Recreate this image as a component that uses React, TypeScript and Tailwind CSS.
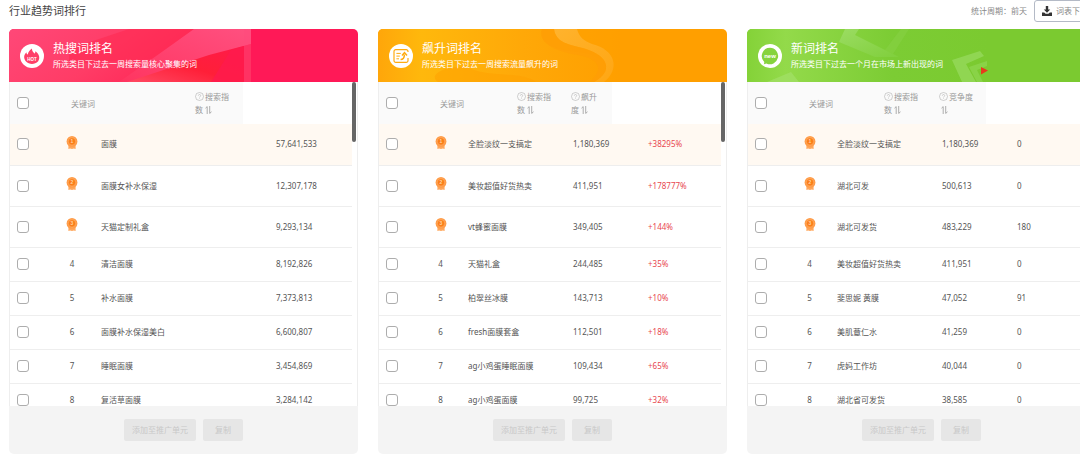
import React from "react";

type Row = { word: string; values: string[] };

type Panel = {
  id: string;
  title: string;
  subtitle: string;
  banner: string;
  art: React.ReactNode;
  icon: React.ReactNode;
  headers: string[];
  headerCols: string[];
  bodyCols: string[];
  valueColor: string;
  rows: Row[];
};

function HotArt() {
  return (
    <svg className="absolute inset-y-0 left-0 h-full w-[242px]" viewBox="0 0 242 53" preserveAspectRatio="none" aria-hidden="true">
      <defs>
        <linearGradient id="hotBase" x1="0" y1="0" x2="1" y2="0.3">
          <stop offset="0" stopColor="#ff4878" />
          <stop offset="0.5" stopColor="#ff3c66" />
          <stop offset="1" stopColor="#ff1f50" />
        </linearGradient>
        <linearGradient id="hotRed" x1="0" y1="1" x2="1" y2="0">
          <stop offset="0" stopColor="#ff4a63" />
          <stop offset="0.45" stopColor="#ff1f38" />
          <stop offset="1" stopColor="#ff1a4c" />
        </linearGradient>
        <linearGradient id="hotPink" x1="0" y1="1" x2="1" y2="0">
          <stop offset="0" stopColor="#ff3560" />
          <stop offset="1" stopColor="#ff5080" />
        </linearGradient>
      </defs>
      <rect width="242" height="53" fill="url(#hotBase)" />
      <path d="M60 20 L120 0 H185 L145 30 L60 35Z" fill="#ff2850" opacity="0.55" />
      <path d="M150 25 L185 0 H242 V16 L200 27 L120 53 H110Z" fill="url(#hotPink)" />
      <path d="M118 53 L200 26 L242 15 V53Z" fill="url(#hotRed)" />
      <path d="M202 53 L222 21 L242 15 V53Z" fill="#ff1a4e" opacity="0.8" />
      <rect x="235" width="7" height="53" fill="#ff4a7c" opacity="0.5" />
    </svg>
  );
}

function RiseArt() {
  return (
    <svg className="absolute inset-y-0 left-0 h-full w-[242px]" viewBox="0 0 242 53" preserveAspectRatio="none" aria-hidden="true">
      <defs>
        <linearGradient id="riseBase" x1="0" y1="0" x2="1" y2="0">
          <stop offset="0" stopColor="#ffa60a" />
          <stop offset="0.18" stopColor="#ffb80c" />
          <stop offset="0.6" stopColor="#ffa808" />
          <stop offset="1" stopColor="#ff9f00" />
        </linearGradient>
        <linearGradient id="riseWave" x1="0" y1="0" x2="1" y2="1">
          <stop offset="0" stopColor="#ffbe4a" />
          <stop offset="1" stopColor="#ffab20" />
        </linearGradient>
      </defs>
      <rect width="242" height="53" fill="url(#riseBase)" />
      <path d="M80 38 C86 38 90 38 96 41 C118 48 145 43 158 53 H60 C50 46 66 38 80 38Z" fill="#ff9f00" opacity="0.5" />
      <path d="M164 0 C160 14 176 21 200 23 C228 26 234 40 222 53 H242 V0Z" fill="#ff9f00" opacity="0.5" />
      <path d="M176 0 H199 C201 8 206 12 214 15 C238 21 242 40 226 53 H216 C236 42 230 27 208 20 C190 15 178 14 176 0Z" fill="url(#riseWave)" opacity="0.6" />
      <path d="M164 0 H176 C178 14 190 15 208 20 C230 27 236 42 216 53 H212 C226 40 222 30 200 26 C176 22 160 14 164 0Z" fill="#ff9c08" opacity="0.5" />
    </svg>
  );
}

function NewArt() {
  return (
    <svg className="absolute inset-y-0 left-0 h-full w-[242px]" viewBox="0 0 242 53" preserveAspectRatio="none" aria-hidden="true">
      <defs>
        <linearGradient id="newBase" x1="0" y1="0" x2="1" y2="0">
          <stop offset="0" stopColor="#84d238" />
          <stop offset="0.16" stopColor="#93da4a" />
          <stop offset="0.6" stopColor="#7ccc34" />
          <stop offset="1" stopColor="#7bca30" />
        </linearGradient>
        <linearGradient id="newBand" x1="0" y1="0" x2="1" y2="1">
          <stop offset="0" stopColor="#9bdc62" />
          <stop offset="1" stopColor="#80cf3c" />
        </linearGradient>
      </defs>
      <rect width="242" height="53" fill="url(#newBase)" />
      <path d="M98 0 H112 L108 6 L152 28 H128 L92 13Z" fill="url(#newBand)" />
      <path d="M146 25 L162 0 H154 L138 21Z" fill="#8ed550" opacity="0.35" />
      <path d="M20 53 L44 43 L52 53Z" fill="#a2df68" opacity="0.7" />
      <path d="M205 31 L233 22 L237 27 L219 35 L229 53 H215Z" fill="#97da5e" opacity="0.75" />
      <path d="M222 38 L240 32 V37 L230 41 L236 53 H230Z" fill="#92d856" opacity="0.6" />
      <path d="M234 38 L241 41.5 L234 45.5Z" fill="#e8391c" />
    </svg>
  );
}

function HotIcon() {
  return (
    <svg className="size-6" viewBox="0 0 24 24" aria-hidden="true">
      <circle cx="12" cy="12" r="12" fill="#fff" />
      <path d="M5.8 17.2 C3.2 13.8 4 10.6 6.4 8.2 C6.5 9.6 7 10.2 7.8 10.4 C8.2 7.8 9.6 6 12 4.4 C11.8 6.6 13 7.6 14.4 9.6 C15.2 9 15.4 8.2 15.4 7.2 C18.8 9.6 20.6 13.4 18.2 17.2 C14.6 20.8 9.4 20.8 5.8 17.2Z" fill="#ff3f68" />
      <text x="12" y="16.8" fill="#fff" fontSize="4.5" fontWeight="700" textAnchor="middle" fontFamily="Liberation Sans, sans-serif">HOT</text>
    </svg>
  );
}

function RiseIcon() {
  return (
    <svg className="size-6" viewBox="0 0 24 24" aria-hidden="true">
      <circle cx="12" cy="12" r="12" fill="#fff" />
      <path d="M19 8V7.4a1.8 1.8 0 0 0-1.8-1.8H6.8A1.8 1.8 0 0 0 5 7.4v9.2a1.8 1.8 0 0 0 1.8 1.8h10.4a1.8 1.8 0 0 0 1.8-1.8V14" fill="none" stroke="#ffab10" strokeWidth="1.2" />
      <path d="M7.4 9.4h4.4M7.4 12.1h3.4M7.4 14.8h2.6" stroke="#ffab10" strokeWidth="1" />
      <path d="M11.6 15.4c2.8 0 3.8-1.2 3.8-5M13 11.4l2.5-2.8 2.5 2.8" fill="none" stroke="#ffab10" strokeWidth="1.5" />
    </svg>
  );
}

function NewIcon() {
  return (
    <svg className="size-6" viewBox="0 0 24 24" aria-hidden="true">
      <circle cx="12" cy="12" r="12" fill="#fff" />
      <path d="M12 3.8a8.2 8.2 0 1 1-3.6 15.6L6 20.2l.3-2.3A8.2 8.2 0 0 1 12 3.8Z" fill="#86d33e" />
      <text x="12" y="14" fill="#fff" fontSize="6" fontWeight="700" textAnchor="middle" fontFamily="Liberation Sans, sans-serif">new</text>
    </svg>
  );
}

function Medal({ rank }: { rank: number }) {
  return (
    <svg className="mx-auto mb-1 block h-[13px] w-3" viewBox="0 0 12 13" role="img" aria-label={`${rank}`}>
      <path d="M2.4 9v4l1.7-.6 1.9.6 1.9-.6 1.7.6V9Z" fill="#ffa75c" />
      <circle cx="6" cy="5.4" r="5.4" fill="#ff9c48" />
      <circle cx="6" cy="5.4" r="3.7" fill="#fb7f18" stroke="#ffc48f" strokeWidth="0.4" />
      <text x="6" y="7.2" fill="#ffd2a4" fontSize="5" fontWeight="700" textAnchor="middle" fontFamily="Liberation Sans, sans-serif">{rank}</text>
    </svg>
  );
}

function HelpIcon() {
  return (
    <svg className="mr-px inline-block size-[9px] align-[-1px]" viewBox="0 0 9 9" aria-hidden="true">
      <circle cx="4.5" cy="4.5" r="4" fill="none" stroke="#b0b0b0" strokeWidth="0.6" />
      <path d="M3.3 3.7c0-1.6 2.4-1.6 2.4 0 0 .8-1.2.9-1.2 1.8M4.5 6.3v.6" fill="none" stroke="#b0b0b0" strokeWidth="0.6" />
    </svg>
  );
}

function SortIcon() {
  return (
    <svg className="ml-0.5 inline-block h-2 w-[7px] align-[-1px]" viewBox="0 0 7 8" aria-hidden="true">
      <path d="M.5 2.2 2.2.6V8M4.7 0v7.4L6.5 5.8" fill="none" stroke="#999" strokeWidth="0.8" />
    </svg>
  );
}

function Tick({ label }: { label: string }) {
  return (
    <input
      type="checkbox"
      aria-label={label}
      className="block size-3 appearance-none rounded-[3px] border border-[#adadad] bg-white checked:bg-[#ff8a1f]"
    />
  );
}

const threeBody = ["w-[44px]", "w-[35px]", "w-[115px]", "w-[75px]", ""];

const panels: Panel[] = [
  {
    id: "hot",
    title: "热搜词排名",
    subtitle: "所选类目下过去一周搜索量核心聚集的词",
    banner: "bg-[#ff1957]",
    art: <HotArt />,
    icon: <HotIcon />,
    headers: ["搜索指数"],
    headerCols: ["w-[61px]", "w-[124px]", "w-[48px]"],
    bodyCols: ["w-[44px]", "w-[36px]", "w-[186px]", ""],
    valueColor: "text-[#555]",
    rows: [
      { word: "面膜", values: ["57,641,533"] },
      { word: "面膜女补水保湿", values: ["12,307,178"] },
      { word: "天猫定制礼盒", values: ["9,293,134"] },
      { word: "清洁面膜", values: ["8,192,826"] },
      { word: "补水面膜", values: ["7,373,813"] },
      { word: "面膜补水保湿美白", values: ["6,600,807"] },
      { word: "睡眠面膜", values: ["3,454,869"] },
      { word: "复活草面膜", values: ["3,284,142"] },
    ],
  },
  {
    id: "rise",
    title: "飙升词排名",
    subtitle: "所选类目下过去一周搜索流量飙升的词",
    banner: "bg-[#ff9f00]",
    art: <RiseArt />,
    icon: <RiseIcon />,
    headers: ["搜索指数", "飙升度"],
    headerCols: ["w-[61px]", "w-[77px]", "w-[54px]", "w-[41px]"],
    bodyCols: threeBody,
    valueColor: "text-[#e8474f]",
    rows: [
      { word: "全脸淡纹一支搞定", values: ["1,180,369", "+38295%"] },
      { word: "美妆超值好货热卖", values: ["411,951", "+178777%"] },
      { word: "vt蜂蜜面膜", values: ["349,405", "+144%"] },
      { word: "天猫礼盒", values: ["244,485", "+35%"] },
      { word: "柏翠丝冰膜", values: ["143,713", "+10%"] },
      { word: "fresh面膜套盒", values: ["112,501", "+18%"] },
      { word: "ag小鸡蛋睡眠面膜", values: ["109,434", "+65%"] },
      { word: "ag小鸡蛋面膜", values: ["99,725", "+32%"] },
    ],
  },
  {
    id: "new",
    title: "新词排名",
    subtitle: "所选类目下过去一个月在市场上新出现的词",
    banner: "bg-[#7bca30]",
    art: <NewArt />,
    icon: <NewIcon />,
    headers: ["搜索指数", "竞争度"],
    headerCols: ["w-[61px]", "w-[75px]", "w-[55px]", "w-[47px]"],
    bodyCols: threeBody,
    valueColor: "text-[#555]",
    rows: [
      { word: "全脸淡纹一支搞定", values: ["1,180,369", "0"] },
      { word: "湖北可发", values: ["500,613", "0"] },
      { word: "湖北可发货", values: ["483,229", "180"] },
      { word: "美妆超值好货热卖", values: ["411,951", "0"] },
      { word: "斐思妮 黄膜", values: ["47,052", "91"] },
      { word: "美肌薏仁水", values: ["41,259", "0"] },
      { word: "虎妈工作坊", values: ["40,044", "0"] },
      { word: "湖北省可发货", values: ["38,585", "0"] },
    ],
  },
];

function RankPanel({ panel }: { panel: Panel }) {
  return (
    <section className="flex min-h-0 flex-col overflow-hidden rounded-[5px]" aria-labelledby={panel.id}>
      <header className={`relative flex h-[53px] shrink-0 items-center gap-2 px-[11px] text-white ${panel.banner}`}>
        {panel.art}
        <div className="relative shrink-0">{panel.icon}</div>
        <div className="relative ml-px">
          <h2 id={panel.id} className="text-[12px] leading-4">{panel.title}</h2>
          <p className="text-[8px] leading-[14px]">{panel.subtitle}</p>
        </div>
      </header>

      <div className="flex min-h-0 flex-1 border-x border-[#eee]">
        <div className="flex min-w-0 flex-1 flex-col">
          <table className="w-0 shrink-0 table-fixed bg-[#fafafa] text-left text-[8px] leading-[13px] text-[#999]">
            <colgroup>
              {panel.headerCols.map((width, i) => (
                <col key={i} className={width} />
              ))}
            </colgroup>
            <thead>
              <tr className="h-[42px]">
                <th className="pl-[7px] font-normal">
                  <Tick label="全选" />
                </th>
                <th className="font-normal">关键词</th>
                {panel.headers.map((name) => (
                  <th key={name} className="pr-4 font-normal break-all last:pr-2.5">
                    <HelpIcon />
                    {name}
                    <SortIcon />
                  </th>
                ))}
              </tr>
            </thead>
          </table>
          <div className="min-h-0 flex-1 overflow-y-auto [scrollbar-width:none]">
            <table className="w-full table-fixed text-left text-[8px] leading-3 text-[#555]">
              <colgroup>
                {panel.bodyCols.map((width, i) => (
                  <col key={i} className={width} />
                ))}
              </colgroup>
              <tbody>
                {panel.rows.map((row, i) => (
                  <tr
                    key={row.word}
                    className={`border-b border-[#eee] ${i === 0 ? "bg-[#fff9f2]" : "bg-white"} ${i < 3 ? "h-[41px]" : "h-[34px]"}`}
                  >
                    <td className="pl-[7px]">
                      <Tick label={row.word} />
                    </td>
                    <td className="text-center">{i < 3 ? <Medal rank={i + 1} /> : i + 1}</td>
                    <td className={panel.headers.length > 1 ? "pl-2.5 whitespace-nowrap" : "pl-[11px] whitespace-nowrap"}>{row.word}</td>
                    {row.values.map((value, j) => (
                      <td key={j} className={j === 1 ? panel.valueColor : "text-[#555]"}>
                        {value}
                      </td>
                    ))}
                  </tr>
                ))}
              </tbody>
            </table>
          </div>
        </div>
        <div className="w-[5px] shrink-0">
          <div className="h-[60px] w-1 rounded-full bg-[#666]" />
        </div>
      </div>

      <footer className="flex h-12 shrink-0 items-center justify-center gap-[7px] bg-[#f4f4f4] text-[8px] text-[#c8c8c8]">
        <button type="button" disabled className="h-[22px] rounded-[2px] bg-[#e6e6e6] px-2">
          添加至推广单元
        </button>
        <button type="button" disabled className="h-[22px] rounded-[2px] bg-[#e6e6e6] px-3">
          复制
        </button>
      </footer>
    </section>
  );
}

export default function App() {
  return (
    <main className="h-screen overflow-hidden bg-white pl-[9px] font-['Noto_Sans','Noto_Sans_CJK_SC',sans-serif]">
      <div className="flex h-full min-w-[1087px] flex-col">
        <div className="flex h-[29px] shrink-0 items-start justify-between">
          <h1 className="text-[11px] leading-[22px] text-[#444]">行业趋势词排行</h1>
          <div className="flex items-center gap-[7px] text-[8px] text-[#888]">
            <span>统计周期：前天</span>
            <button type="button" className="flex h-[22px] items-center gap-1 rounded-[3px] border border-[#b4bac6] px-[7px]">
              <svg className="size-2.5" viewBox="0 0 10 10" aria-hidden="true">
                <path d="M3.8 0h2.4v3.4h2L5 6.8 1.8 3.4h2Z" fill="#333" />
                <path d="M0 6.4h2.2L3.6 7.8h2.8l1.4-1.4H10V10H0Z" fill="#333" />
              </svg>
              词表下载
            </button>
          </div>
        </div>
        <div className="grid min-h-0 flex-1 grid-cols-3 gap-5">
          {panels.map((panel) => (
            <RankPanel key={panel.id} panel={panel} />
          ))}
        </div>
      </div>
    </main>
  );
}
